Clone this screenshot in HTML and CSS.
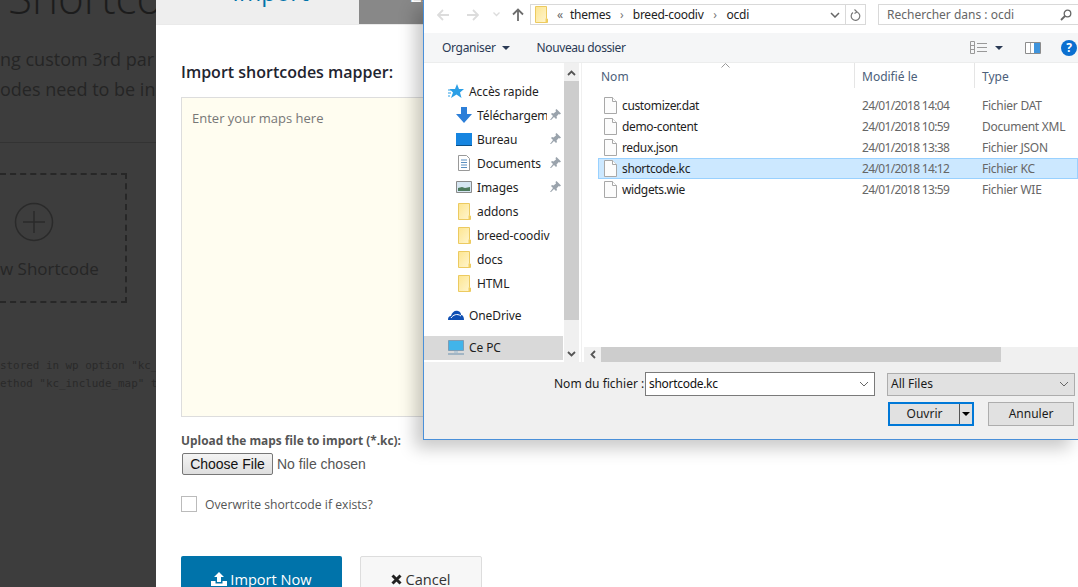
FILE: index.html
```html
<!DOCTYPE html>
<html lang="fr">
<head>
<meta charset="utf-8">
<title>Import shortcodes</title>
<link rel="stylesheet" href="styles.css">
</head>
<body>
<svg class="defs" width="0" height="0" aria-hidden="true">
  <defs><linearGradient id="fold" x1="0" y1="0" x2="1" y2="1"><stop offset="0" stop-color="#fde58f"/><stop offset="1" stop-color="#fff6d2"/></linearGradient></defs>
  <symbol id="folder" viewBox="0 0 13 17"><path d="M.5.5h11v12l1 .5v3.500H.5z" fill="url(#fold)" stroke="#ecca60"/><path d="M10.500 12.500h1.500v4h-1.500z" fill="#f3cf5f"/></symbol>
  <symbol id="file" viewBox="0 0 13 17"><path d="M.5.5h8l4 4v12H.5z" fill="#fcfcfc" stroke="#a8a8a8"/><path d="M8.500.5v4h4" fill="#fff" stroke="#a8a8a8"/></symbol>
  <symbol id="pin" viewBox="0 0 11 11"><path d="M6.500 0L11 4.500 9.800 5.500 8.800 5 6.500 7.500 7 9 6 10 4 8 1 11H0l3-4-2-2 1-1 1.500.5L6 2.500 5.500 1z" fill="#9aa3ac"/></symbol>
</svg>

<main class="page">
  <h1 class="page-title">Shortcode</h1>
  <p class="page-lead">ng custom 3rd par<br>odes need to be in</p>
  <hr class="page-rule">
  <div class="new-box">
    <svg class="new-plus" width="40" height="40" viewBox="0 0 40 40"><circle cx="20" cy="20" r="18.500" fill="none" stroke="#2a2a2a" stroke-width="1.500"/><path d="M20 9v22M9 20h22" stroke="#2a2a2a" stroke-width="1.500"/></svg>
    <span class="new-label">w Shortcode</span>
  </div>
  <pre class="page-code">stored in wp option "kc_
ethod "kc_include_map" t</pre>
</main>

<section class="modal">
  <div class="tabs">
    <div class="tab tab-active"><span>Import</span></div>
    <div class="tab tab-off"><span>Export</span></div>
  </div>
  <div class="modal-body">
    <h2 class="mapper-title">Import shortcodes mapper:</h2>
    <div class="mapper-area">Enter your maps here</div>
    <p class="upload-label">Upload the maps file to import (*.kc):</p>
    <div class="file-row"><button class="choose">Choose File</button><span>No file chosen</span></div>
    <label class="overwrite"><span class="check"></span><span class="overwrite-text">Overwrite shortcode if exists?</span></label>
    <div class="actions">
      <button class="btn btn-primary"><svg width="16" height="14" viewBox="0 0 16 14"><path d="M8 0l5 5H10v5H6V5H3z" fill="#fff"/><path d="M0 9h4.500v2.500h7V9H16v5H0z" fill="#fff"/></svg>Import Now</button>
      <button class="btn btn-cancel"><svg width="11" height="11" viewBox="0 0 11 11"><path d="M1.500 1.500l8 8M9.500 1.500l-8 8" stroke="#222" stroke-width="3"/></svg>Cancel</button>
    </div>
  </div>
</section>

<section class="dialog">
  <div class="nav-bar">
    <div class="nav-arrows">
      <svg width="12" height="12" viewBox="0 0 12 12"><path d="M6 1L1 6l5 5M1 6h11" fill="none" stroke="#dcdcdc" stroke-width="1.800"/></svg>
      <svg width="12" height="12" viewBox="0 0 12 12"><path d="M6 1l5 5-5 5M11 6H0" fill="none" stroke="#dcdcdc" stroke-width="1.800"/></svg>
      <svg width="7" height="5" viewBox="0 0 7 5"><path d="M.5.5l3 3 3-3" fill="none" stroke="#dcdcdc" stroke-width="1.300"/></svg>
      <svg width="12" height="13" viewBox="0 0 12 13"><path d="M1 6.500l5-5 5 5M6 1.500V13" fill="none" stroke="#6d6d6d" stroke-width="1.800"/></svg>
    </div>
    <div class="address">
      <svg class="addr-folder" width="13" height="17"><use href="#folder"/></svg>
      <span class="crumb-more">«</span>
      <span class="crumb">themes</span><span class="crumb-sep">›</span>
      <span class="crumb">breed-coodiv</span><span class="crumb-sep crumb-sep2">›</span>
      <span class="crumb">ocdi</span>
      <svg class="addr-chev" width="10" height="6" viewBox="0 0 10 6"><path d="M1 1l4 4 4-4" fill="none" stroke="#666" stroke-width="1.500"/></svg>
      <span class="addr-refresh"><svg width="11" height="12" viewBox="0 0 11 12"><path d="M3 3.500a4.300 4.300 0 1 0 4-.5M4.500 .5L7 3 4.500 4.500" fill="none" stroke="#777" stroke-width="1.200"/></svg></span>
    </div>
    <div class="search"><span>Rechercher dans : ocdi</span><svg width="12" height="12" viewBox="0 0 12 12"><circle cx="7.500" cy="4.500" r="3.300" fill="none" stroke="#666" stroke-width="1.300"/><path d="M5 7l-4 4" stroke="#666" stroke-width="1.800"/></svg></div>
  </div>

  <div class="toolbar">
    <span class="tool tool-org">Organiser<i class="caret"></i></span>
    <span class="tool tool-new">Nouveau dossier</span>
    <span class="tool-right">
      <svg width="17" height="13" viewBox="0 0 17 13"><path d="M.5.500h4v12h-4zM.5 4.500h4M.5 8.500h4M7 2.500h10M7 6.500h10M7 10.500h10" fill="none" stroke="#999"/></svg>
      <i class="caret caret-view"></i>
      <svg class="pane-ico" width="16" height="12" viewBox="0 0 16 12"><path d="M.5.500h15v11H.5z" fill="#fff" stroke="#8c8c8c"/><path d="M5.500 1v10" stroke="#aaa"/><path d="M9 1h6v10H9z" fill="#3f94dc"/></svg>
      <span class="help">?</span>
    </span>
  </div>

  <div class="browser">
    <nav class="tree">
      <div class="tree-list">
        <div class="tree-item lvl0"><svg class="ico" width="16" height="14" viewBox="0 0 16 14"><path d="M9 0l2 5h5l-4 3.500L13.500 14 8.500 10.500 3 14l2-5.500L1.500 5H7z" fill="#2b9fe6"/><path d="M0 6h3M0 9h3M0 12h2" stroke="#2b9fe6"/></svg>Accès rapide</div>
        <div class="tree-item lvl1"><svg class="ico" width="16" height="16" viewBox="0 0 16 16"><path d="M5 0h6v7h5l-8 9-8-9h5z" fill="#2d7fd8"/></svg><span class="tree-name clip">Téléchargem</span><svg class="pin" width="11" height="11"><use href="#pin"/></svg></div>
        <div class="tree-item lvl1"><svg class="ico" width="16" height="13" viewBox="0 0 16 13"><path d="M0 0h16v13H0z" fill="#1685e0"/><path d="M0 12.500h16" stroke="#0b4f86"/></svg><span class="tree-name">Bureau</span><svg class="pin" width="11" height="11"><use href="#pin"/></svg></div>
        <div class="tree-item lvl1"><svg class="ico" width="16" height="16" viewBox="0 0 16 16"><path d="M2.500.500h8l3 3v12h-11z" fill="#fff" stroke="#999"/><path d="M5 5h6M5 7.500h6M5 10h6M5 12.500h6" stroke="#5a8fc0"/></svg><span class="tree-name">Documents</span><svg class="pin" width="11" height="11"><use href="#pin"/></svg></div>
        <div class="tree-item lvl1"><svg class="ico" width="16" height="12" viewBox="0 0 16 12"><path d="M.5.500h15v11H.5z" fill="#d6e6f2" stroke="#8a8a8a"/><path d="M2 7l4-1 3 1 5-1v4H2z" fill="#4d7a5c"/></svg><span class="tree-name">Images</span><svg class="pin" width="11" height="11"><use href="#pin"/></svg></div>
        <div class="tree-item lvl1"><svg class="ico ico-f" width="13" height="17"><use href="#folder"/></svg><span class="tree-name">addons</span></div>
        <div class="tree-item lvl1"><svg class="ico ico-f" width="13" height="17"><use href="#folder"/></svg><span class="tree-name">breed-coodiv</span></div>
        <div class="tree-item lvl1"><svg class="ico ico-f" width="13" height="17"><use href="#folder"/></svg><span class="tree-name">docs</span></div>
        <div class="tree-item lvl1"><svg class="ico ico-f" width="13" height="17"><use href="#folder"/></svg><span class="tree-name">HTML</span></div>
        <div class="tree-item lvl0 tree-gap"><svg class="ico" width="16" height="10" viewBox="0 0 16 10"><path d="M0 10c0-3 1-4 3-4 1-4 4-6 7-5 2 .5 3 2 3 4 2 0 3 2 3 5z" fill="#0f4fb3"/><path d="M3 8c2-3 6-5 10-2" fill="none" stroke="#fff" stroke-width="1"/></svg>OneDrive</div>
        <div class="tree-item lvl0 tree-current"><svg class="ico" width="16" height="15" viewBox="0 0 16 15"><path d="M.5.500h15v10H.5z" fill="#41b4ea" stroke="#7d9db5"/><path d="M0 14h16" stroke="#8fa9bd" stroke-width="1.500"/><path d="M6 11h4v2H6z" fill="#b8c8d4"/></svg>Ce PC</div>
      </div>
      <div class="tree-scroll">
        <svg width="9" height="6" viewBox="0 0 9 6"><path d="M1 5l3.500-3.500L8 5" fill="none" stroke="#555" stroke-width="1.800"/></svg>
        <span class="tree-thumb"></span>
        <svg width="9" height="6" viewBox="0 0 9 6"><path d="M1 1l3.500 3.500L8 1" fill="none" stroke="#555" stroke-width="1.800"/></svg>
      </div>
    </nav>

    <div class="files">
      <div class="cols cols-head">
        <span class="col-name">Nom<svg class="sort" width="9" height="5" viewBox="0 0 9 5"><path d="M.5 4.500l4-4 4 4" fill="none" stroke="#999"/></svg></span>
        <span class="col-date">Modifié le</span>
        <span class="col-type">Type</span>
      </div>
      <div class="rows">
        <div class="cols row"><span class="col-name"><svg width="13" height="17"><use href="#file"/></svg>customizer.dat</span><span class="col-date">24/01/2018 14:04</span><span class="col-type">Fichier DAT</span></div>
        <div class="cols row"><span class="col-name"><svg width="13" height="17"><use href="#file"/></svg>demo-content</span><span class="col-date">24/01/2018 10:59</span><span class="col-type">Document XML</span></div>
        <div class="cols row"><span class="col-name"><svg width="13" height="17"><use href="#file"/></svg>redux.json</span><span class="col-date">24/01/2018 13:38</span><span class="col-type">Fichier JSON</span></div>
        <div class="cols row row-sel"><span class="col-name"><svg width="13" height="17"><use href="#file"/></svg>shortcode.kc</span><span class="col-date">24/01/2018 14:12</span><span class="col-type">Fichier KC</span></div>
        <div class="cols row"><span class="col-name"><svg width="13" height="17"><use href="#file"/></svg>widgets.wie</span><span class="col-date">24/01/2018 13:59</span><span class="col-type">Fichier WIE</span></div>
      </div>
      <div class="hscroll">
        <svg width="6" height="9" viewBox="0 0 6 9"><path d="M5 1L1.500 4.500 5 8" fill="none" stroke="#555" stroke-width="1.800"/></svg>
        <span class="hthumb"></span>
      </div>
    </div>
  </div>

  <div class="footer">
    <div class="footer-row">
      <span class="fname-label">Nom du fichier :</span>
      <div class="fname-input"><span>shortcode.kc</span><svg width="10" height="6" viewBox="0 0 10 6"><path d="M1 1l4 4 4-4" fill="none" stroke="#666"/></svg></div>
      <div class="ftype"><span>All Files</span><svg width="10" height="6" viewBox="0 0 10 6"><path d="M1 1l4 4 4-4" fill="none" stroke="#666"/></svg></div>
    </div>
    <div class="footer-btns">
      <div class="win-btn win-open"><span class="win-open-text">Ouvrir</span><span class="win-split"><i class="caret caret-black"></i></span></div>
      <div class="win-btn"><span>Annuler</span></div>
    </div>
  </div>
</section>
</body>
</html>
```
FILE: styles.css
```css
* { box-sizing: border-box; }
html, body { margin: 0; height: 587px; overflow: hidden; }
body { position: relative; width: 1078px; background: #3d3d3d; font-family: "Open Sans", sans-serif; }
.defs { position: absolute; }

/* dimmed page behind the modal */
.page { width: 156px; height: 587px; overflow: hidden; color: #232323; white-space: nowrap; }
.page-title { margin: -33px 0 0 8px; font-size: 44px; line-height: 60px; font-weight: 300; color: #1c1c1c; }
.page-lead { margin: 17px 0 0; font-size: 18px; line-height: 30px; color: #252525; }
.page-rule { margin: 38px 0 0; border: 0; border-top: 1px solid #333; }
.new-box { width: 127px; height: 130px; margin-top: 30px; border: 2px dashed #272727; border-left: 0; display: flex; flex-direction: column; align-items: flex-start; padding: 27px 0 0 14px; }
.new-plus { display: block; }
.new-label { margin: 12px 0 0 -14px; font-size: 17px; line-height: 30px; color: #262626; }
.page-code { margin: 54px 0 0; font: 10.900px/18px "DejaVu Sans Mono", monospace; color: #2a2a2a; }

/* modal */
.modal { position: absolute; left: 156px; top: 0; width: 922px; height: 587px; background: #fff; overflow: hidden; }
.tabs { display: flex; height: 25px; border-bottom: 1px solid #eaeaea; }
.tab { height: 24px; overflow: hidden; }
.tab span { display: block; font-size: 24px; line-height: 32px; }
.tab-active { width: 203px; background: #eee; color: #0073aa; text-align: center; }
.tab-active span { margin-top: -24px; padding-left: 26px; }
.tab-off { width: 100px; background: #888; color: #fff; }
.tab-off span { margin-top: -23px; padding-left: 50px; }
.modal-body { width: 420px; padding: 33px 0 0 25px; }
.mapper-title { margin: 0; font-size: 16px; line-height: 28px; font-weight: 600; color: #1f2530; }
.mapper-area { height: 320px; margin-top: 11px; padding: 10px; background: #fffdf0; border: 1px solid #ddd; font-size: 13px; line-height: 21px; color: #777; }
.upload-label { margin: 14px 0 0; font-size: 11.900px; line-height: 18px; font-weight: 700; color: #555; }
.file-row { display: flex; align-items: center; gap: 4px; margin: 4px 0 0 1px; font: 14px "Liberation Sans", sans-serif; color: #555; }
.choose { width: 91px; height: 22px; padding: 0; background: linear-gradient(#f4f4f4, #dedede); border: 1px solid #777; border-radius: 2px; font: 14px "Liberation Sans", sans-serif; color: #111; }
.overwrite { display: flex; align-items: center; gap: 8px; margin-top: 21px; font-size: 12.200px; line-height: 16px; color: #555; }
.overwrite-text { margin: 1px 0 -1px; }
.check { width: 16px; height: 16px; background: #fff; border: 1px solid #bbb; }
.actions { display: flex; gap: 18px; margin-top: 44px; }
.btn { display: flex; align-items: center; justify-content: center; gap: 3px; height: 48px; padding: 0 0 2px; border-radius: 2px; font: 14.600px "Open Sans", sans-serif; }
.btn-primary { width: 161px; background: #0073aa; border: 0; color: #fff; }
.btn-cancel { width: 122px; background: #f7f7f7; border: 1px solid #ddd; color: #333; }

/* Windows file dialog */
.dialog { position: absolute; left: 423px; top: -1px; width: 655px; height: 441px; overflow: hidden; background: #fff; border: 1px solid #4a90d9; border-width: 0 0 1px 1px; font: 12px "Noto Sans", sans-serif; color: #1e1e1e; display: flex; flex-direction: column; }
.nav-bar { display: flex; align-items: center; height: 34px; padding-bottom: 3px; flex: none; }
.nav-arrows { display: flex; align-items: center; flex: none; width: 106px; padding-left: 13px; }
.nav-arrows svg:nth-child(2) { margin-left: 18px; }
.nav-arrows svg:nth-child(3) { margin-left: 14px; }
.nav-arrows svg:nth-child(4) { margin-left: 12px; }
.address { display: flex; align-items: center; flex: none; width: 336px; height: 21px; border: 1px solid #d9d9d9; padding-left: 4px; }
.addr-folder { margin-right: 9px; }
.crumb-more { width: 13px; color: #666; }
.crumb { color: #222; letter-spacing: -.25px; }
.crumb-sep { width: 22px; text-align: center; color: #777; }
.crumb-sep2 { width: 23px; }
.addr-chev { margin-left: auto; margin-right: 5px; }
.addr-refresh { display: flex; align-items: center; justify-content: center; width: 20px; height: 19px; border-left: 1px solid #d9d9d9; }
.search { display: flex; align-items: center; justify-content: space-between; flex: none; width: 200px; height: 21px; margin-left: 12px; padding: 0 6px 0 8px; border: 1px solid #d9d9d9; border-right: 0; color: #666; }
.toolbar { display: flex; align-items: center; height: 30px; flex: none; padding-right: 1px; background: #f5f6f7; border-bottom: 1px solid #eceded; color: #2b3a55; white-space: nowrap; }
.tool-org { margin-left: 18px; display: flex; align-items: center; gap: 6px; letter-spacing: -.3px; }
.tool-new { margin-left: 27px; letter-spacing: -.4px; }
.tool-right { display: flex; align-items: center; margin-left: auto; }
.caret { display: inline-block; width: 0; height: 0; border: 4px solid transparent; border-top: 4px solid #2b3a55; border-bottom: 0; }
.caret-view { margin: 0 0 0 8px; }
.pane-ico { margin-left: 22px; }
.help { width: 16px; height: 16px; margin-left: 20px; border-radius: 50%; background: #0b6fd0; color: #fff; font: 700 12px/16px "Noto Sans", sans-serif; text-align: center; }

.browser { display: flex; height: 299px; flex: none; }
.tree { display: flex; width: 155px; flex: none; }
.tree-list { width: 140px; padding-top: 16px; }
.tree-item { display: flex; align-items: center; height: 24px; white-space: nowrap; position: relative; letter-spacing: -.1px; }
.lvl0 { padding-left: 24px; }
.lvl1 { padding-left: 32px; }
.lvl0 .ico { margin-right: 5px; }
.lvl1 .ico { flex: none; margin-right: 5px; }
.lvl1 .ico-f { margin: 0 6px 0 2px; }
.tree-gap { margin-top: 8px; }
.tree-current { margin-top: 9px; padding-bottom: 2px; background: #d9d9d9; width: 139px; }
.tree-name.clip { width: 70px; overflow: hidden; }
.pin { position: absolute; left: 126px; top: 6px; }
.tree-scroll { display: flex; flex-direction: column; align-items: center; width: 15px; background: #f0f0f0; padding-top: 7px; }
.tree-thumb { width: 15px; height: 239px; margin: 5px 0 31px; background: #cdcdcd; flex: none; }
.files { flex: 1; margin-left: 2px; display: flex; flex-direction: column; border-left: 1px solid #f0f0f0; min-width: 0; }
.cols { display: grid; align-items: center; white-space: nowrap; }
.cols-head { grid-template-columns: 273px 120px 1fr; height: 25px; color: #4c607a; flex: none; }
.cols-head > span { height: 25px; line-height: 27px; padding-left: 7px; border-right: 1px solid #e5e5e5; position: relative; }
.cols-head > .col-name { padding-left: 19px; }
.cols-head > .col-type { border-right: 0; }
.sort { position: absolute; left: 139px; top: 0; }
.rows { flex: 1; padding: 7px 0 0 16px; }
.row { height: 21px; grid-template-columns: 257px 120px 1fr; border: 1px solid transparent; color: #666; }
.row .col-name { display: flex; align-items: center; gap: 5px; color: #1e1e1e; padding-left: 5px; letter-spacing: -.35px; }
.row .col-date { padding-left: 6px; letter-spacing: -.65px; }
.row .col-type { padding-left: 6px; letter-spacing: -.25px; }
.row-sel { background: #cce8ff; border-color: #99d1ff; }
.hscroll { display: flex; align-items: center; height: 15px; flex: none; background: #f0f0f0; margin-left: 2px; padding-left: 6px; }
.hthumb { width: 400px; height: 15px; margin-left: 5px; background: #cdcdcd; }

.footer { flex: 1; background: #f0f0f0; padding: 10px 0 0 130px; }
.footer-row { display: flex; align-items: center; }
.fname-label { width: 91px; padding-bottom: 2px; color: #1a1a1a; }
.fname-input { display: flex; align-items: center; justify-content: space-between; width: 230px; height: 24px; padding: 0 5px 0 3px; background: #fff; border: 1px solid #7a7a7a; color: #111; letter-spacing: -.3px; }
.fname-input span, .ftype span, .win-btn span { padding-bottom: 2px; }
.ftype { display: flex; align-items: center; justify-content: space-between; width: 188px; height: 23px; margin-left: 12px; padding: 0 5px 0 3px; background: #e1e1e1; border: 1px solid #adadad; color: #1a1a1a; }
.footer-btns { display: flex; gap: 14px; margin: 6px 0 0 334px; }
.win-btn { display: flex; align-items: center; justify-content: center; width: 86px; height: 24px; background: #e1e1e1; border: 1px solid #adadad; color: #1a1a1a; }
.win-open { border: 2px solid #0078d7; justify-content: space-between; }
.win-open-text { flex: 1; text-align: center; }
.win-btn .win-split { display: flex; align-items: center; justify-content: center; width: 13px; height: 20px; padding: 0; border-left: 1px solid #555; }
.caret-black { border-top-color: #000; }

/* soft shadow cast by the dialog on the modal */
.modal::after { content: ""; position: absolute; left: 267px; top: 0; width: 655px; height: 440px; box-shadow: -8px 8px 16px rgba(0,0,0,.22); }
```
